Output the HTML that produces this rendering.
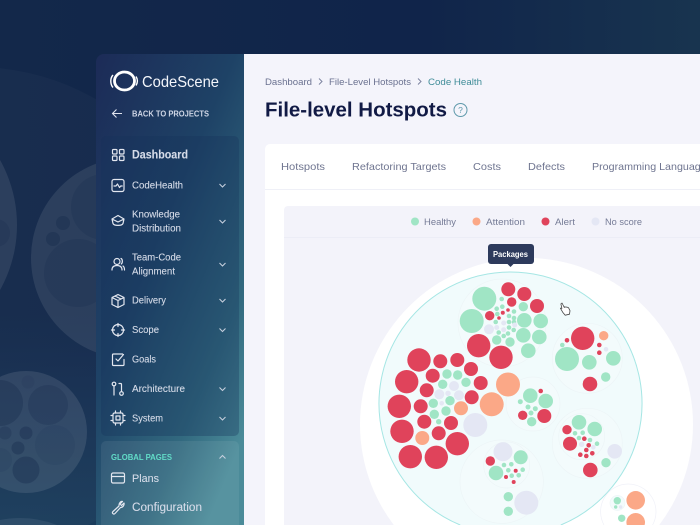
<!DOCTYPE html>
<html><head><meta charset="utf-8"><title>CodeScene</title>
<style>html,body{margin:0;padding:0;width:700px;height:525px;overflow:hidden;background:#13284a}svg{display:block;filter:blur(.35px)}text{font-family:"Liberation Sans",sans-serif}.m text{stroke:#d5dbe8;stroke-width:.1}</style></head>
<body>
<svg width="700" height="525" viewBox="0 0 700 525" xmlns="http://www.w3.org/2000/svg">
<defs>
<linearGradient id="bg" x1="0" y1="0" x2="1" y2="0"><stop offset="0" stop-color="#13284a"/><stop offset=".6" stop-color="#10244a"/><stop offset="1" stop-color="#18344f"/></linearGradient>
<linearGradient id="bg2" x1="0" y1="0" x2="0" y2="1"><stop offset=".55" stop-color="#1f4a68" stop-opacity="0"/><stop offset="1" stop-color="#1f4a68" stop-opacity=".6"/></linearGradient>
<linearGradient id="side" x1="0" y1="0" x2=".75" y2="1"><stop offset="0" stop-color="#1c2b57"/><stop offset=".45" stop-color="#1e4266"/><stop offset=".8" stop-color="#32697f"/><stop offset="1" stop-color="#4b8b99"/></linearGradient>
</defs>
<rect width="700" height="525" fill="url(#bg)"/>
<rect x="0" y="54" width="100" height="471" fill="url(#bg2)"/>
<g fill="#ffffff">
<path d="M-138 525A243 243 0 1 1 88 525Z" fill-opacity=".025"/>
<circle cx="-116" cy="225" r="133" fill-opacity=".09"/>
<circle cx="132" cy="258" r="101" fill-opacity=".09"/>
<circle cx="26" cy="432" r="61" fill-opacity=".1"/>
<path d="M-17 525A102 102 0 0 1 57 525Z" fill-opacity=".07"/>
</g>
<g fill="#13284a">
<circle cx="-4" cy="233" r="14" fill-opacity=".2"/>
<circle cx="104" cy="207" r="33" fill-opacity=".2"/><circle cx="78" cy="273" r="34" fill-opacity=".2"/><circle cx="63" cy="223" r="7" fill-opacity=".35"/><circle cx="53" cy="239" r="7" fill-opacity=".35"/>
<circle cx="48" cy="405" r="20" fill-opacity=".25"/><circle cx="0" cy="403" r="23" fill-opacity=".3"/><circle cx="55" cy="445" r="20" fill-opacity=".1"/><circle cx="26" cy="433" r="6.500" fill-opacity=".35"/><circle cx="18" cy="448" r="6.500" fill-opacity=".35"/><circle cx="5" cy="433" r="6.500" fill-opacity=".25"/><circle cx="26" cy="470" r="13.500" fill-opacity=".35"/><circle cx="28" cy="382" r="6.500" fill-opacity=".1"/><circle cx="0" cy="460" r="12" fill-opacity=".1"/>
</g>
<!-- sidebar -->
<path d="M96 525V62a8 8 0 0 1 8-8H244V525Z" fill="url(#side)"/>
<rect x="101" y="136" width="138" height="300" rx="5" fill="#17315a" fill-opacity=".32"/>
<path d="M101 525V446a5 5 0 0 1 5-5H234a5 5 0 0 1 5 5V525Z" fill="#ffffff" fill-opacity=".07"/>
<!-- logo -->
<g fill="none" stroke="#fff">
<ellipse cx="124.500" cy="81" rx="10" ry="9" stroke-width="2.800"/>
<path d="M113 75c-1.800 2-2.200 4-2.200 6s.4 4.500 2.200 6.500" stroke-width="1.400"/>
<path d="M136 76.500c1 1.500 1.400 3 1.400 4.500s-.4 3-1.400 4.500" stroke-width="1.400"/>
</g>
<text x="142" y="87" font-size="16" fill="#f4f6fb" textLength="77" lengthAdjust="spacingAndGlyphs">CodeScene</text>
<path d="M122 113.500h-9M116.500 109.500l-4 4 4 4" fill="none" stroke="#dfe3ee" stroke-width="1.100"/>
<text x="132" y="116.500" font-size="8.500" font-weight="bold" fill="#cfd6e6" textLength="77" lengthAdjust="spacingAndGlyphs">BACK TO PROJECTS</text>
<g class="m" fill="#d5dbe8" font-size="10">
<text x="132" y="158.500" font-size="11.500" font-weight="bold" textLength="56" lengthAdjust="spacingAndGlyphs">Dashboard</text>
<text x="132" y="188.500" textLength="51" lengthAdjust="spacingAndGlyphs">CodeHealth</text>
<text x="132" y="217.500" textLength="48" lengthAdjust="spacingAndGlyphs">Knowledge</text>
<text x="132" y="231.500" textLength="49" lengthAdjust="spacingAndGlyphs">Distribution</text>
<text x="132" y="260.500" textLength="49" lengthAdjust="spacingAndGlyphs">Team-Code</text>
<text x="132" y="274.500" textLength="43" lengthAdjust="spacingAndGlyphs">Alignment</text>
<text x="132" y="303.500" textLength="34" lengthAdjust="spacingAndGlyphs">Delivery</text>
<text x="132" y="333" textLength="27" lengthAdjust="spacingAndGlyphs">Scope</text>
<text x="132" y="362.500" textLength="24" lengthAdjust="spacingAndGlyphs">Goals</text>
<text x="132" y="392" textLength="53" lengthAdjust="spacingAndGlyphs">Architecture</text>
<text x="132" y="421.500" textLength="31" lengthAdjust="spacingAndGlyphs">System</text>
<text x="132" y="482" font-size="11" textLength="27" lengthAdjust="spacingAndGlyphs">Plans</text>
<text x="132" y="511" font-size="11.500" textLength="70" lengthAdjust="spacingAndGlyphs">Configuration</text>
</g>
<text x="111" y="460" font-size="8" font-weight="bold" fill="#62dcc8" textLength="61" lengthAdjust="spacingAndGlyphs">GLOBAL PAGES</text>
<g fill="none" stroke="#c5cfdd" stroke-width="1.100">
<path d="M219.500 184l3 3 3-3M219.500 220l3 3 3-3M219.500 263l3 3 3-3M219.500 299l3 3 3-3M219.500 328.500l3 3 3-3M219.500 387.500l3 3 3-3M219.500 417l3 3 3-3M219.500 458.500l3-3 3 3"/>
</g>
<g fill="none" stroke="#e3e7f0" stroke-width="1.200" stroke-linejoin="round" stroke-linecap="round">
<rect x="112.500" y="149.500" width="4.500" height="4.500" rx="1"/><rect x="119.500" y="149.500" width="4.500" height="4.500" rx="1"/><rect x="112.500" y="156" width="4.500" height="4.500" rx="1"/><rect x="119.500" y="156" width="4.500" height="4.500" rx="1"/>
<rect x="112" y="179.500" width="12" height="12" rx="2"/><path d="M114 186h2l1.500-2 2 3.500 1.200-1.500h1.500"/>
<path d="M118 215.500l6 3.500-1 4.500c-1 2.500-9 2.500-10 0l-1-4.500zM112 219l6 3 6-3"/>
<circle cx="117" cy="261.500" r="3"/><path d="M112 270c0-3 2-4.500 5-4.500s5 1.500 5 4.500M121 258.500c1.500.5 2 4 .3 5.500M123 266c1 .7 1.500 2 1.500 4"/>
<path d="M118 294.500l6 3v7l-6 3-6-3v-7zM112 297.500l6 3 6-3M118 300.500v7M115 296l6 3"/>
<circle cx="118" cy="330" r="5.500"/><path d="M118 323.500v3M118 333.500v3M111.500 330h3M121.500 330h3"/>
<path d="M122.500 354h-9a1 1 0 0 0-1 1v9.500a1 1 0 0 0 1 1h9.500a1 1 0 0 0 1-1v-5M116 359l2 2 5.500-6.500"/>
<circle cx="114" cy="384" r="1.800"/><path d="M114 386v9M119 383.500h1.500a1 1 0 0 1 1 1v7"/><circle cx="121.500" cy="393.500" r="1.800"/>
<rect x="113" y="413" width="10" height="10" rx="1.500"/><rect x="116" y="416" width="4" height="4"/><path d="M111 415.500h2M111 420.500h2M123 415.500h2M123 420.500h2M115.500 411v2M120.500 411v2M115.500 423v2M120.500 423v2"/>
<rect x="111.500" y="473" width="13" height="10" rx="1.500"/><path d="M111.500 476.500h13"/>
<path d="M122.500 501.500l-2.500 2.500 1.500 1.500 2.500-2.500c.5 2-1 4.500-3.500 4.500l-5.500 6c-1.500 1.500-3.500-.5-2-2l6-5.500c-.3-3 2-5 3.500-4.500z"/>
</g>
<!-- main -->
<rect x="244" y="54" width="456" height="471" fill="#f4f4fb"/>
<g font-size="9.500" fill="#6a7190">
<text x="265" y="85" textLength="47" lengthAdjust="spacingAndGlyphs">Dashboard</text>
<text x="329" y="85" textLength="82" lengthAdjust="spacingAndGlyphs">File-Level Hotspots</text>
<text x="428" y="85" fill="#3f8c98" textLength="54" lengthAdjust="spacingAndGlyphs">Code Health</text>
</g>
<path d="M319 78.500l3 3-3 3M418 78.500l3 3-3 3" fill="none" stroke="#7d84a0"/>
<text x="265" y="116.500" font-size="20" font-weight="bold" fill="#111a45" textLength="182" lengthAdjust="spacingAndGlyphs">File-level Hotspots</text>
<circle cx="460.500" cy="110" r="6.500" fill="none" stroke="#5f99ab"/>
<text x="460.500" y="113" font-size="8.500" text-anchor="middle" fill="#5f99ab">?</text>
<path d="M265 525V149a5 5 0 0 1 5-5H700V525Z" fill="#fff"/>
<rect x="265" y="189" width="435" height="1" fill="#eff0f7"/>
<g font-size="10.500" fill="#6f7590">
<text x="281" y="170" textLength="44" lengthAdjust="spacingAndGlyphs">Hotspots</text>
<text x="352" y="170" textLength="94" lengthAdjust="spacingAndGlyphs">Refactoring Targets</text>
<text x="473" y="170" textLength="28" lengthAdjust="spacingAndGlyphs">Costs</text>
<text x="528" y="170" textLength="37" lengthAdjust="spacingAndGlyphs">Defects</text>
<text x="592" y="170" textLength="120" lengthAdjust="spacingAndGlyphs">Programming Languages</text>
</g>
<!-- chart panel -->
<path d="M284 525V210a4 4 0 0 1 4-4H700V525Z" fill="#f3f3fa"/>
<rect x="284" y="237" width="416" height="1" fill="#ecedf6"/>
<circle cx="415" cy="221.500" r="4" fill="#a0e5c5"/><circle cx="476.500" cy="221.500" r="4" fill="#fba887"/><circle cx="545.500" cy="221.500" r="4" fill="#e0435b"/><circle cx="595.500" cy="221.500" r="4" fill="#e4e7f4"/>
<g font-size="9" fill="#757b96">
<text x="424" y="224.800" textLength="32" lengthAdjust="spacingAndGlyphs">Healthy</text>
<text x="486" y="224.800" textLength="39" lengthAdjust="spacingAndGlyphs">Attention</text>
<text x="555" y="224.800" textLength="20" lengthAdjust="spacingAndGlyphs">Alert</text>
<text x="605" y="224.800" textLength="37" lengthAdjust="spacingAndGlyphs">No score</text>
</g>
<path d="M393.800 525A166.500 166.500 0 1 1 659.200 525Z" fill="#fff"/>
<rect x="488" y="244" width="46" height="20" rx="3" fill="#2d3a5c"/>
<path d="M507.500 264h6l-3 3z" fill="#2d3a5c"/>
<text x="493" y="257" font-size="8" font-weight="bold" fill="#fff" textLength="35" lengthAdjust="spacingAndGlyphs">Packages</text>
<path d="M460.200 525A131.500 131.500 0 1 1 560.800 525" fill="#f1fbfc" stroke="#a5e6e4" stroke-width="1"/>
<!-- rings -->
<g fill="#f3fbfc" stroke="#edf5f7" stroke-width=".7">
<circle cx="502" cy="323" r="44"/><circle cx="587.300" cy="358.300" r="35"/><circle cx="587.300" cy="443.300" r="35"/><circle cx="501.700" cy="481.700" r="41.700"/><circle cx="533" cy="404" r="27"/><path d="M604 525A27.700 27.700 0 1 1 652.600 525" fill="#fff" stroke="#f0f1f8"/>
<circle cx="581.700" cy="436.700" r="23"/><circle cx="506.700" cy="465" r="23"/><circle cx="617.500" cy="503" r="7.500"/>
</g>
<g fill="#e0435b">
<circle cx="508.300" cy="289.300" r="7"/><circle cx="524.300" cy="294" r="7"/><circle cx="511.700" cy="302" r="4.700"/><circle cx="537" cy="306" r="7"/><circle cx="489.700" cy="315.700" r="4.700"/><circle cx="478.700" cy="345.700" r="11.700"/><circle cx="501" cy="357.300" r="11.700"/>
<circle cx="502.800" cy="312.700" r="2"/><circle cx="508" cy="310" r="1.800"/><circle cx="499" cy="318" r="1.800"/>
<circle cx="419" cy="360" r="11.700"/><circle cx="406.700" cy="381.700" r="11.700"/><circle cx="440.300" cy="361.300" r="7"/><circle cx="457.300" cy="360" r="7"/><circle cx="471" cy="369" r="7"/><circle cx="480.700" cy="383" r="7"/><circle cx="432.700" cy="375.700" r="7"/><circle cx="426.700" cy="390.300" r="7"/><circle cx="399.300" cy="406.300" r="11.700"/><circle cx="420.700" cy="406.300" r="7"/><circle cx="471.700" cy="397.300" r="7"/><circle cx="424.300" cy="421.700" r="7"/><circle cx="451" cy="423" r="7"/><circle cx="438.700" cy="433.300" r="7"/><circle cx="402" cy="431.300" r="11.700"/><circle cx="457.300" cy="443.700" r="11.700"/><circle cx="410.300" cy="456.700" r="11.700"/><circle cx="436.300" cy="457.300" r="11.700"/>
<circle cx="490.300" cy="461" r="4.700"/><circle cx="515.700" cy="470.700" r="2"/><circle cx="506" cy="477" r="2"/><circle cx="513.700" cy="482" r="2"/>
<circle cx="522.700" cy="415.300" r="4.700"/><circle cx="544.300" cy="416" r="7"/><circle cx="540.700" cy="391" r="2.300"/>
<circle cx="582.700" cy="338.300" r="11.700"/><circle cx="590" cy="384" r="7.300"/><circle cx="599.300" cy="345" r="2.300"/><circle cx="599.300" cy="352.700" r="2.300"/><circle cx="567" cy="340.300" r="2.300"/>
<circle cx="567" cy="429.700" r="4.700"/><circle cx="570" cy="443.700" r="7"/><circle cx="584.300" cy="438.700" r="2.300"/><circle cx="588.700" cy="445.300" r="2.300"/><circle cx="586.300" cy="450" r="2.300"/><circle cx="592.300" cy="453.300" r="2.300"/><circle cx="586.300" cy="456" r="2.300"/><circle cx="580.300" cy="454.700" r="2.300"/><circle cx="590.300" cy="470" r="7.300"/>
</g>
<g fill="#a0e5c5">
<circle cx="484.300" cy="298.700" r="12"/><circle cx="471.700" cy="321" r="12"/><circle cx="528.300" cy="350.700" r="7.300"/><circle cx="523.300" cy="335.300" r="7.300"/><circle cx="524.300" cy="320.300" r="7.300"/><circle cx="523.300" cy="306.700" r="4.700"/><circle cx="540.700" cy="321" r="7.300"/><circle cx="539.300" cy="337" r="7.300"/><circle cx="510" cy="342" r="4.700"/><circle cx="496.700" cy="340" r="4.700"/>
<circle cx="501.700" cy="299" r="2.300"/><circle cx="502.300" cy="306.700" r="2.300"/><circle cx="496.700" cy="308.700" r="2.300"/><circle cx="497.300" cy="314" r="2.300"/><circle cx="495.700" cy="322" r="2.300"/><circle cx="498.700" cy="332.500" r="2.300"/><circle cx="503.700" cy="336" r="2.300"/><circle cx="508" cy="333.500" r="2.300"/><circle cx="509" cy="327.500" r="2.300"/><circle cx="513.700" cy="330" r="2.300"/><circle cx="509" cy="322" r="2.300"/><circle cx="509" cy="316" r="2.300"/><circle cx="514" cy="322" r="2.300"/><circle cx="514" cy="318" r="2.300"/><circle cx="514" cy="311.500" r="2.300"/>
<circle cx="447" cy="374" r="4.700"/><circle cx="457.700" cy="375" r="4.700"/><circle cx="466" cy="382.300" r="4.700"/><circle cx="442.700" cy="384.300" r="4.700"/><circle cx="433.300" cy="403.300" r="4.700"/><circle cx="450" cy="400.700" r="4.700"/><circle cx="446" cy="411" r="4.700"/><circle cx="434.300" cy="414.300" r="4.700"/><circle cx="438.700" cy="421.700" r="2.700"/>
<circle cx="520.700" cy="457.300" r="7"/><circle cx="496" cy="473" r="7.300"/><circle cx="504" cy="465" r="2.300"/><circle cx="511.300" cy="464.300" r="2.300"/><circle cx="508.300" cy="470.300" r="2.300"/><circle cx="518.700" cy="475.300" r="2.300"/><circle cx="522.700" cy="469.700" r="2.300"/><circle cx="511.700" cy="475.700" r="2.300"/>
<circle cx="508.300" cy="496.700" r="4.700"/><circle cx="508.300" cy="511.300" r="4.700"/>
<circle cx="530.300" cy="395.700" r="7.300"/><circle cx="520.300" cy="401.700" r="2.500"/><circle cx="528" cy="407" r="2.500"/><circle cx="535.300" cy="408.700" r="2.500"/><circle cx="531" cy="413" r="2.500"/><circle cx="531.700" cy="421.700" r="4.700"/><circle cx="545.700" cy="401" r="7.300"/>
<circle cx="567" cy="359" r="12"/><circle cx="589.300" cy="362.300" r="7.300"/><circle cx="613.300" cy="358.300" r="7.300"/><circle cx="605.700" cy="377" r="4.700"/><circle cx="562.300" cy="345" r="2.300"/>
<circle cx="579" cy="422.300" r="7.300"/><circle cx="594.700" cy="429" r="7.300"/><circle cx="575" cy="433.300" r="2.300"/><circle cx="582.700" cy="432.700" r="2.300"/><circle cx="579" cy="438" r="2.300"/><circle cx="590" cy="440" r="2.300"/><circle cx="597" cy="443.700" r="2.300"/><circle cx="606" cy="462.700" r="4.700"/>
<circle cx="621.700" cy="518.300" r="3.700"/><circle cx="617.300" cy="500.700" r="3.700"/><circle cx="615.700" cy="507" r="1.700"/>
</g>
<g fill="#fba887">
<circle cx="508" cy="384.500" r="12"/><circle cx="491.700" cy="404.300" r="12"/><circle cx="461" cy="408.300" r="7"/><circle cx="422.300" cy="438" r="7"/><circle cx="603.700" cy="335.700" r="4.700"/><circle cx="635.700" cy="500.300" r="9.300"/><path d="M626.800 525A9.300 9.300 0 1 1 644.600 525Z"/>
</g>
<g fill="#e4e7f4">
<circle cx="489" cy="329.300" r="5"/><circle cx="496.700" cy="327.500" r="2.500"/><circle cx="503.700" cy="323" r="2.500"/><circle cx="503.700" cy="329.700" r="2.500"/><circle cx="514.700" cy="325" r="2.500"/>
<circle cx="454" cy="386" r="5"/><circle cx="439.300" cy="394.300" r="5"/><circle cx="459" cy="395.300" r="5"/><circle cx="448" cy="393.300" r="2.700"/><circle cx="441.700" cy="403.300" r="2.300"/><circle cx="475.300" cy="425" r="12"/>
<circle cx="503" cy="451.700" r="9.500"/><circle cx="526.300" cy="502.700" r="12"/>
<circle cx="606" cy="349.300" r="2.300"/><circle cx="614.700" cy="451.300" r="7.300"/><circle cx="581.700" cy="444.300" r="2.700"/><circle cx="593.300" cy="447.300" r="2.300"/><circle cx="620.700" cy="507" r="1.700"/>
</g>
<!-- cursor -->
<path d="M562 303l2.300 4.500.5-.8 1 .5.7-.2 1.200.4.800.3 1.500 3-.5 3.500-4.300 1-2.500-3-2.300-4 1.500.2-1-4.500z" fill="#fff" stroke="#444" stroke-width=".8" stroke-linejoin="round"/>
</svg>
</body></html>
